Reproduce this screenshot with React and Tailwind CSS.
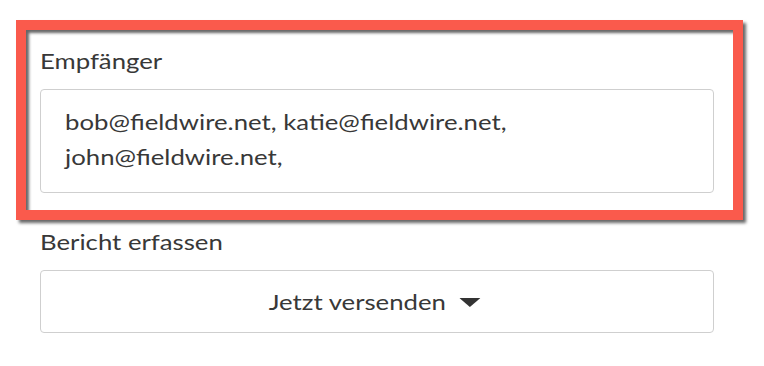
export default function App() {
  const font = { fontFamily: 'Lato, "Noto Sans", sans-serif' }

  return (
    <div className="w-[764px] h-[366px] overflow-hidden bg-white text-[#383838]" style={font}>
      <div className="pt-[20px] pl-[16px]">
        <div className="w-[727px] h-[200px] border-[10px] border-[#fa5a4c] pl-[14px] pr-[19px] shadow-[3px_3px_3px_rgba(0,0,0,0.6),inset_3px_3px_3px_rgba(0,0,0,0.6)]">
          <div className="pt-[17px] w-fit text-[22px] leading-[28px] origin-left scale-x-[1.17]">Empfänger</div>
          <div className="mt-[14px] h-[104px] border border-[#cfcfcf] rounded-[4px] pl-[24px] pt-[14px]">
            <div className="w-fit text-[22px] leading-[35px] origin-left scale-x-[1.17] whitespace-nowrap">
              bob@fieldwire.net, katie@fieldwire.net,
              <br />
              john@fieldwire.net,
            </div>
          </div>
        </div>
      </div>
      <div className="px-[40px] w-[754px]">
        <div className="pt-[8px] w-fit text-[22px] leading-[28px] origin-left scale-x-[1.17]">Bericht erfassen</div>
        <button
          type="button"
          className="mt-[14px] w-full h-[63px] border border-[#cfcfcf] rounded-[4px] flex items-center justify-center text-[22px] text-[#383838]"
        >
          <span className="flex items-center gap-[11px] scale-x-[1.17] -translate-x-[3px]">
            <span>Jetzt versenden</span>
            <svg width="18" height="9" viewBox="0 0 18 9" className="mt-[2px]">
              <path d="M0 0 H18 L9 9 Z" fill="#333" />
            </svg>
          </span>
        </button>
      </div>
    </div>
  )
}
